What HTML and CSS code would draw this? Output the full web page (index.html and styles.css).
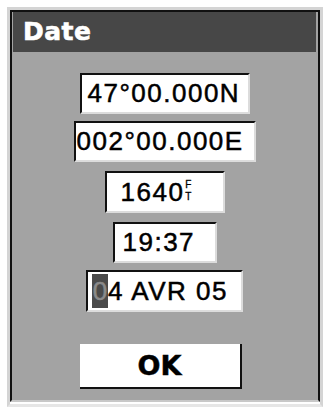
FILE: index.html
```html
<!DOCTYPE html>
<html>
<head>
<meta charset="utf-8">
<link rel="stylesheet" href="styles.css">
</head>
<body>
<div class="frame">
  <div class="dialog">
    <div class="title">Date</div>
    <div class="content">
      <div class="field w-lat">47°00.000N</div>
      <div class="field w-lon">002°00.000E</div>
      <div class="field w-alt gap-l">1640<span class="unit"><span>F</span><span>T</span></span></div>
      <div class="field w-time gap-l">19:37</div>
      <div class="field w-date"><span class="cursor">0</span>4 AVR 05</div>
      <div class="ok">OK</div>
    </div>
  </div>
</div>
</body>
</html>
```
FILE: styles.css
```css
html, body {
  margin: 0;
  padding: 0;
  background: #ffffff;
  width: 326px;
  height: 412px;
  overflow: hidden;
}
.frame {
  margin: 7px 3px 0 7px;
  width: 310px;
  height: 394px;
  border: 3px solid #d4d4d4;
  border-bottom-color: #e6e6e6;
}
.dialog {
  height: 392px;
  border-top: 2px solid #111;
  border-left: 2px solid #111;
  border-right: 2px solid #111;
  border-bottom: 2px solid #c8c8c8;
  background: #a3a3a3;
  box-sizing: border-box;
  display: flex;
  flex-direction: column;
}
.title {
  height: 40px;
  margin: 0 2px 0 1px;
  background: #474747;
  color: #fff;
  font-family: "DejaVu Sans", sans-serif;
  font-weight: bold;
  font-size: 25px;
  line-height: 40px;
  padding-left: 10px;
  letter-spacing: 0.5px;
  -webkit-text-stroke: 0.6px #fff;
}
.content {
  display: flex;
  flex-direction: column;
  align-items: center;
  padding-top: 21px;
  gap: 7px;
  padding-right: 1px;
}
.field {
  box-sizing: border-box;
  height: 41px;
  background: #fff;
  border-top: 2px solid #111;
  border-left: 2px solid #111;
  border-right: 2px solid #dcdcdc;
  border-bottom: 2px solid #dcdcdc;
  font-family: "Liberation Sans", Arial, sans-serif;
  font-size: 26px;
  letter-spacing: 1.5px;
  line-height: 37px;
  color: #000;
  -webkit-text-stroke: 0.5px #000;
  padding-left: 6px;
  white-space: nowrap;
  display: flex;
  align-items: center;
}
.w-lat { width: 170px; }
.w-lon { width: 182px; padding-left: 1px; }
.w-alt { width: 120px; padding-left: 14px; height: 42px; }
.w-time { width: 104px; padding-left: 8px; }
.w-date { width: 157px; padding-left: 4px; height: 42px; }
.gap-l { margin-top: 2px; }
.unit {
  display: flex;
  flex-direction: column;
  font-size: 10px;
  line-height: 12px;
  letter-spacing: 0;
  margin-left: 1px;
  margin-top: -3px;
  -webkit-text-stroke: 0.3px #000;
}
.unit span {
  display: block;
  height: 12px;
}
.cursor {
  background: #4a4a4a;
  color: #8a8a8a;
  -webkit-text-stroke: 0.5px #8a8a8a;
  display: inline-block;
  height: 34px;
  line-height: 34px;
  width: 16px;
  letter-spacing: 0;
  text-align: center;
}
.ok {
  box-sizing: border-box;
  margin-top: 25px;
  width: 162px;
  height: 45px;
  margin-right: 8px;
  background: #fff;
  border-right: 2px solid #111;
  border-bottom: 2px solid #111;
  font-family: "DejaVu Sans", sans-serif;
  font-weight: bold;
  font-size: 27px;
  line-height: 43px;
  text-align: center;
  color: #000;
  -webkit-text-stroke: 0.5px #000;
}
```
